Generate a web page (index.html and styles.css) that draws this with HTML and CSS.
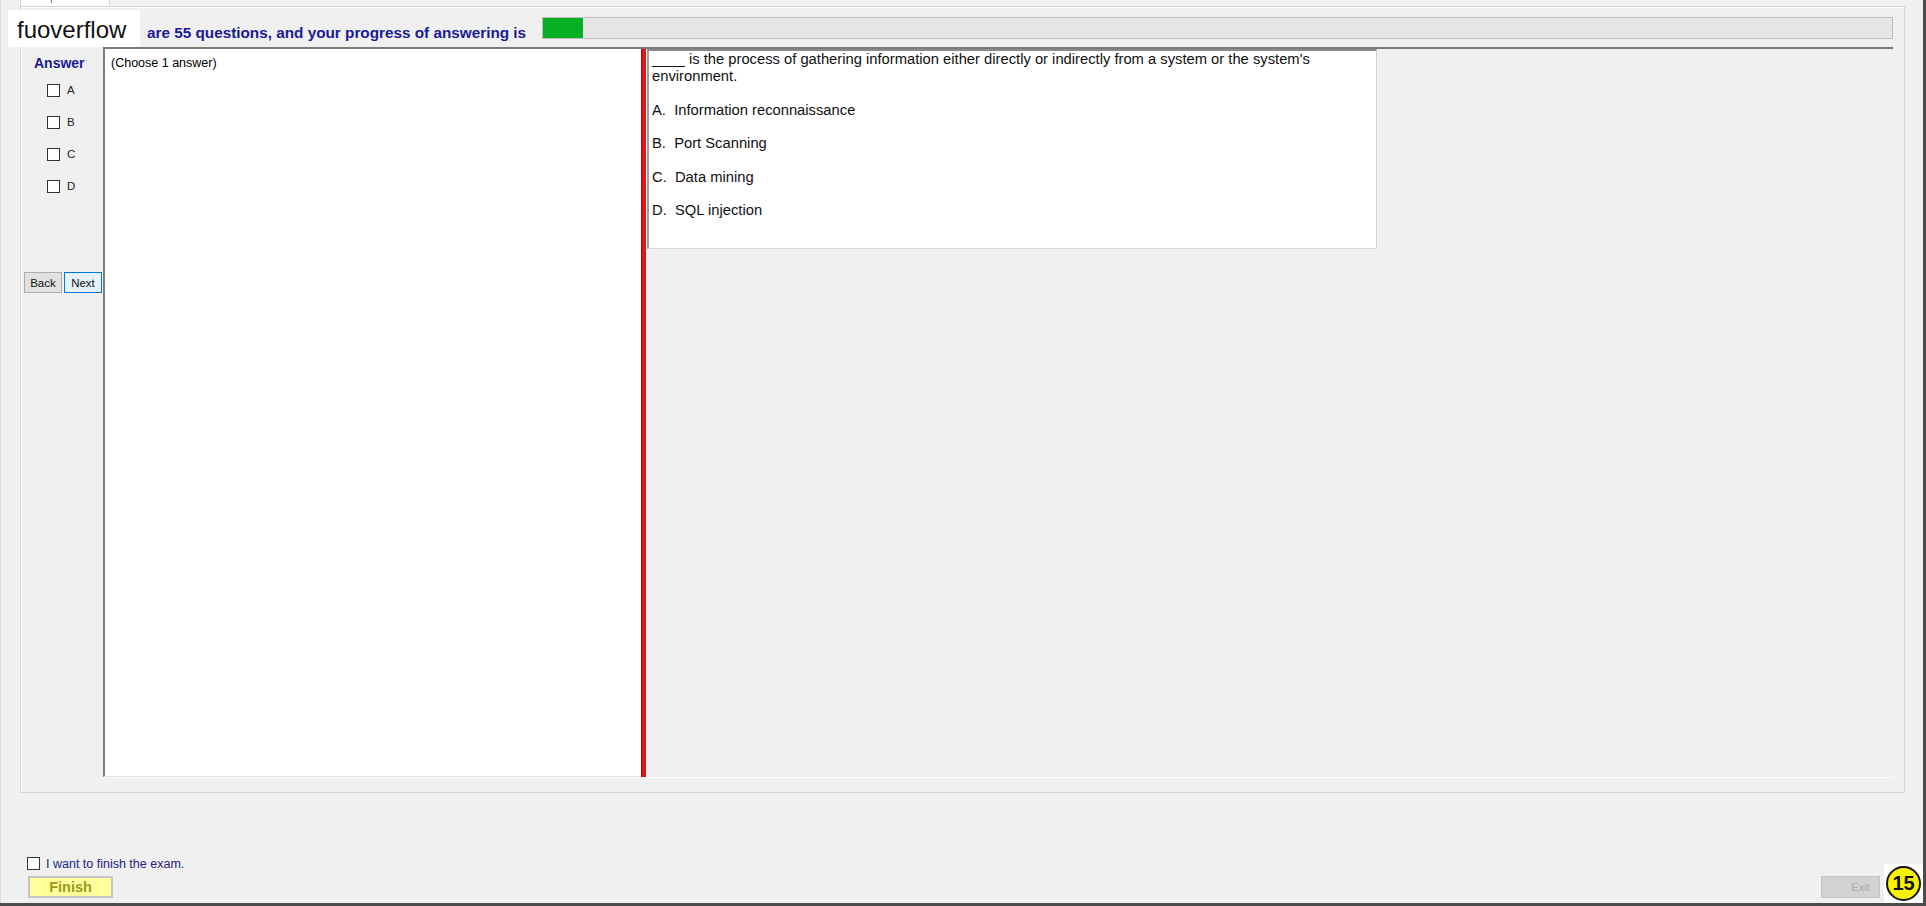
FILE: index.html
```html
<!DOCTYPE html>
<html lang="en">
  <head>
    <meta charset="UTF-8" />
    <title>Exam</title>
    <link rel="stylesheet" href="styles.css">
  </head>
  <body>
    <div class="app">
      <div class="tabstrip">
        <div class="tab"><span class="tab-mark"></span></div>
      </div>

      <div class="group">
        <div class="progress-row">
          <div class="progress-text">are 55 questions, and your progress of answering is</div>
          <div class="progress-bar"><div class="progress-fill" style="width: 40px"></div></div>
        </div>

        <div class="content">
          <div class="sidebar">
            <div class="answer-title">Answer</div>
            <div class="answer-list">
              <label class="answer-row"><span class="box"></span>A</label>
              <label class="answer-row"><span class="box"></span>B</label>
              <label class="answer-row"><span class="box"></span>C</label>
              <label class="answer-row"><span class="box"></span>D</label>
            </div>
            <div class="nav-buttons">
              <button class="btn-back">Back</button>
              <button class="btn-next">Next</button>
            </div>
          </div>

          <div class="main">
            <div class="choose-panel">(Choose 1 answer)</div>
            <div class="splitter"></div>
            <div class="question-area">
              <div class="question-box">
                <div class="question-text">____ is the process of gathering information either directly or indirectly from a system or the system's environment.</div>
                <div class="option">A.&nbsp;&nbsp;Information reconnaissance</div>
                <div class="option">B.&nbsp;&nbsp;Port Scanning</div>
                <div class="option">C.&nbsp;&nbsp;Data mining</div>
                <div class="option">D.&nbsp;&nbsp;SQL injection</div>
              </div>
            </div>
          </div>
        </div>
      </div>

      <div class="footer">
        <label class="finish-check"><span class="box"></span>I want to finish the exam.</label>
        <div class="footer-buttons">
          <button class="btn-finish">Finish</button>
          <button class="btn-exit" disabled>Exit</button>
        </div>
      </div>
    </div>

    <div class="brand">fuoverflow</div>
    <div class="badge"><span class="badge-circle">15</span></div>
  </body>
</html>
```

FILE: styles.css
```css
* {
  box-sizing: border-box;
}
body {
  margin: 0;
  width: 1926px;
  height: 906px;
  overflow: hidden;
  position: relative;
  background: #f0f0f0;
  font-family: "Liberation Sans", Arial, sans-serif;
  color: #000;
}
.app {
  width: 1926px;
  height: 906px;
  border-right: 3px solid #4b4b4b;
  border-bottom: 3px solid #4b4b4b;
  box-shadow: inset 7px 0 0 -6px #dadada;
}
.tabstrip {
  height: 6px;
  padding-left: 20px;
}
.tab {
  width: 90px;
  height: 6px;
  background: #fff;
  border: 1px solid #d6d6d6;
  border-top: none;
  border-bottom: none;
  position: relative;
}
.tab-mark {
  display: block;
  width: 1px;
  height: 3px;
  margin-left: 30px;
  background: #777;
}
.group {
  margin-left: 20px;
  width: 1885px;
  height: 787px;
  border: 1px solid #d5d5d5;
  box-shadow: inset 1px 1px 0 #fff;
  display: flex;
  flex-direction: column;
}
.progress-row {
  height: 40px;
  display: flex;
  flex-shrink: 0;
}
.progress-text {
  width: 521px;
  padding-left: 126px;
  padding-top: 17px;
  font-size: 15.3px;
  line-height: 18px;
  font-weight: bold;
  color: #1a1a96;
  white-space: nowrap;
}
.progress-bar {
  flex: 1;
  height: 22px;
  margin-top: 10px;
  margin-right: 11px;
  background: #e6e6e6;
  border: 1px solid #bcbcbc;
}
.progress-fill {
  height: 100%;
  background: #06b025;
}
.content {
  flex: 1;
  display: flex;
  padding-bottom: 14px;
}
.sidebar {
  width: 82px;
  flex-shrink: 0;
  display: flex;
  flex-direction: column;
}
.answer-title {
  margin-top: 8px;
  margin-left: 13px;
  font-size: 14px;
  line-height: 16px;
  font-weight: bold;
  color: #1a1a96;
}
.answer-list {
  margin-top: 3px;
  padding-left: 26px;
}
.answer-row {
  display: flex;
  align-items: center;
  height: 32px;
  font-size: 11.5px;
  color: #222;
}
.box {
  display: inline-block;
  width: 13px;
  height: 13px;
  background: #fff;
  border: 1px solid #333;
  margin-right: 7px;
  flex-shrink: 0;
}
.nav-buttons {
  display: flex;
  gap: 2px;
  margin-top: 70px;
  margin-left: 3px;
}
.nav-buttons button {
  width: 38px;
  height: 21px;
  padding: 0;
  font-family: "Liberation Sans", Arial, sans-serif;
  font-size: 11.5px;
  color: #111;
}
.btn-back {
  background: #e1e1e1;
  border: 1px solid #adadad;
}
.btn-next {
  background: #e5f1fb;
  border: 1px solid #0078d7;
}
.main {
  flex: 1;
  display: flex;
  margin-right: 11px;
  border-top: 2px solid #7a7a7a;
  border-bottom: 1px solid #fbfbfb;
}
.choose-panel {
  width: 538px;
  background: #fff;
  border-left: 2px solid #7d7d7d;
  border-bottom: 1px solid #e4e4e4;
  padding: 6px 6px;
  font-size: 12.5px;
  line-height: 16px;
}
.splitter {
  width: 5px;
  background: #e2141a;
  border-left: 1px solid #9c0c0c;
}
.question-area {
  flex: 1;
  padding-left: 1px;
}
.question-box {
  width: 730px;
  height: 200px;
  background: #fff;
  border-style: solid;
  border-width: 2px 1px 1px 2px;
  border-color: #8a8a8a #d0d0d0 #dcdcdc #a0a0a0;
  padding: 0 3px;
  font-size: 14.75px;
  line-height: 17px;
  color: #111;
}
.option {
  margin-top: 16.6px;
  white-space: nowrap;
}
.footer {
  padding-left: 27px;
  padding-right: 43px;
  margin-top: 64px;
}
.finish-check {
  display: flex;
  align-items: center;
  height: 13px;
  font-size: 12.5px;
  color: #22228a;
}
.finish-check .box {
  margin-right: 6px;
}
.footer-buttons {
  display: flex;
  justify-content: space-between;
  margin-top: 6px;
}
.btn-finish {
  margin-left: 1px;
  width: 85px;
  height: 22px;
  padding: 0;
  background: #ffff9c;
  border: 2px solid #c6c6c6;
  font-family: "Liberation Sans", Arial, sans-serif;
  font-size: 14.5px;
  font-weight: bold;
  color: #9a9a18;
}
.btn-exit {
  width: 59px;
  height: 22px;
  padding: 0 0 0 20px;
  background: #d2d2d2;
  border: 1px solid #c4c4c4;
  font-family: "Liberation Sans", Arial, sans-serif;
  font-size: 11px;
  color: #a8a8a8;
}
.brand {
  position: absolute;
  left: 8px;
  top: 10px;
  width: 132px;
  height: 37px;
  padding: 3px 0 0 9px;
  background: #fff;
  font-size: 24px;
  line-height: 33px;
  color: #111;
}
.badge {
  position: absolute;
  left: 1884px;
  top: 864px;
  width: 39px;
  height: 39px;
  background: #fff;
  display: flex;
  align-items: center;
  justify-content: center;
}
.badge-circle {
  width: 35px;
  height: 35px;
  border-radius: 50%;
  background: #f7f200;
  border: 2px solid #111;
  display: flex;
  align-items: center;
  justify-content: center;
  font-size: 20px;
  font-weight: bold;
  color: #111;
}
```
